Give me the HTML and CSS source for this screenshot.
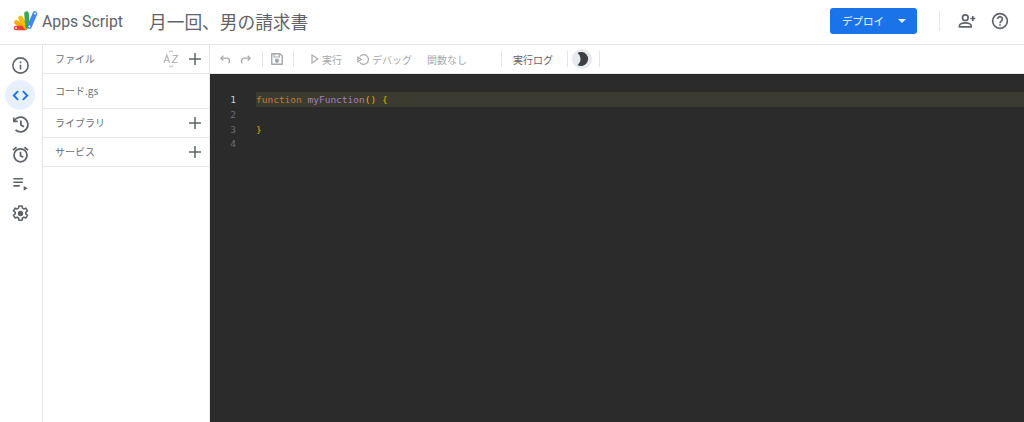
FILE: index.html
```html
<!DOCTYPE html>
<html lang="ja">
<head>
<meta charset="utf-8">
<title>Apps Script</title>
<link rel="stylesheet" href="styles.css">
</head>
<body>
<header class="topbar">
  <svg class="logo" width="26" height="22" viewBox="0 0 26 22">
    <g fill="none" stroke-linecap="round" stroke-width="4.600">
      <path d="M3.500 12.500 12 17.500" stroke="#f9ab00"/>
      <path d="M3 18 12 18" stroke="#ea4335"/>
      <path d="M7.500 8 13 17" stroke="#fbbc04"/>
      <path d="M13.500 3.500 14.500 16.500" stroke="#34a853"/>
      <path d="M22 3.500 16.500 16.500" stroke="#4285f4"/>
    </g>
    <circle cx="16.500" cy="16.500" r="1" fill="#fff"/>
    <circle cx="22" cy="3.500" r="1" fill="#fff"/>
    <circle cx="3" cy="18" r="1" fill="#fff"/>
  </svg>
  <span class="product">Apps Script</span>
  <span class="project">月一回、男の請求書</span>
  <button class="deploy"><span>デプロイ</span><i class="caret"></i></button>
  <span class="top-divider"></span>
  <svg class="top-icon first" width="20" height="20" viewBox="0 0 24 24" fill="none" stroke="#5f6368" stroke-width="2">
    <circle cx="10" cy="8" r="3.400"/>
    <path d="M3 19v-1.600c0-2 4.400-3.200 7-3.200s7 1.200 7 3.200V19z"/>
    <path d="M19 6v6M16 9h6"/>
  </svg>
  <svg class="top-icon" width="18" height="18" viewBox="0 0 24 24" fill="none" stroke="#5f6368" stroke-width="2.200">
    <circle cx="12" cy="12" r="9.800"/>
    <path d="M8.800 9.400a3.200 3.200 0 1 1 5 2.700c-1.200.8-1.800 1.400-1.800 2.900"/>
    <path d="M12 16.400v2"/>
  </svg>
</header>
<div class="main">
  <nav class="rail">
    <span class="rail-btn">
      <svg width="19" height="19" viewBox="0 0 24 24" fill="none" stroke="#5f6368" stroke-width="2"><circle cx="12" cy="12" r="9.600"/><path d="M12 11v6M12 7v2"/></svg>
    </span>
    <span class="rail-btn active">
      <svg width="19" height="19" viewBox="0 0 24 24" fill="none" stroke="#1a73e8" stroke-width="2.400"><path d="M9 6.500 3.500 12 9 17.500M15 6.500l5.500 5.500L15 17.500"/></svg>
    </span>
    <span class="rail-btn">
      <svg width="19" height="19" viewBox="0 0 24 24" fill="none" stroke="#5f6368" stroke-width="2.200"><path d="M4 7.500A9.300 9.300 0 1 1 5.700 18.800"/><path d="M3.500 3v5h5" stroke-width="2"/><path d="M12.500 7v5.500l4 2.400"/></svg>
    </span>
    <span class="rail-btn">
      <svg width="19" height="19" viewBox="0 0 24 24" fill="none" stroke="#5f6368" stroke-width="2.200"><circle cx="12" cy="13" r="8.200"/><path d="M12 8.500V13.500l3.500 2M2.500 6.500 7 2.800M21.500 6.500 17 2.800"/></svg>
    </span>
    <span class="rail-btn">
      <svg width="19" height="19" viewBox="0 0 24 24" fill="#5f6368"><path d="M3 5h12v2H3zM3 9.500h12v2H3zM3 14h8v2H3z"/><path d="M16 15v6l5-3z"/></svg>
    </span>
    <span class="rail-btn">
      <svg width="19" height="19" viewBox="0 0 24 24" fill="none" stroke="#5f6368" stroke-width="2"><path d="M10 2.500h4l.5 2.700 1.700 1 2.600-1 2 3.500-2.100 1.700v2l2.100 1.800-2 3.400-2.600-.9-1.700 1-.5 2.800h-4l-.5-2.800-1.700-1-2.600.9-2-3.400 2.100-1.800v-2L3.200 8.700l2-3.500 2.600 1 1.700-1z" stroke-linejoin="round"/><circle cx="12" cy="12" r="2.400" fill="#5f6368"/></svg>
    </span>
  </nav>
  <aside class="files">
    <div class="row head">
      <span class="label">ファイル</span>
      <svg class="az" width="16" height="18" viewBox="0 0 16 18" fill="none" stroke="#b4b6b9" stroke-width="1.200">
        <path d="M1 13 3.800 5 6.600 13M2 10.500h3.600"/>
        <path d="M9.500 5.500h5L9.500 12.500h5"/>
        <path d="M6 2.200 8 .8l2 1.400M6 15.800l2 1.400 2-1.400" stroke-width="1"/>
      </svg>
      <svg class="plus" width="14" height="14" viewBox="0 0 14 14"><path d="M7 1v12M1 7h12" stroke="#5f6368" stroke-width="1.500"/></svg>
    </div>
    <div class="row file"><span class="label">コード.gs</span></div>
    <div class="row">
      <span class="label">ライブラリ</span>
      <svg class="plus" width="14" height="14" viewBox="0 0 14 14"><path d="M7 1v12M1 7h12" stroke="#5f6368" stroke-width="1.500"/></svg>
    </div>
    <div class="row">
      <span class="label">サービス</span>
      <svg class="plus" width="14" height="14" viewBox="0 0 14 14"><path d="M7 1v12M1 7h12" stroke="#5f6368" stroke-width="1.500"/></svg>
    </div>
  </aside>
  <section class="editor">
    <div class="toolbar">
      <svg class="tool" width="13" height="13" viewBox="0 0 24 24" fill="none" stroke="#a6a8ab" stroke-width="2.400"><path d="M8 5 3.500 9.500 8 14"/><path d="M4 9.500h10a5.500 5.500 0 0 1 5.500 5.500 5 5 0 0 1-2 4"/></svg>
      <svg class="tool redo" width="13" height="13" viewBox="0 0 24 24" fill="none" stroke="#a6a8ab" stroke-width="2.400"><path d="M16 5l4.500 4.500L16 14"/><path d="M20 9.500H10A5.500 5.500 0 0 0 4.500 15a5 5 0 0 0 2 4"/></svg>
      <span class="sep s1"></span>
      <svg class="tool" width="14" height="14" viewBox="0 0 24 24" fill="none" stroke="#a6a8ab" stroke-width="2.400"><path d="M3 3h14l4 4v14H3z" stroke-linejoin="round"/><path d="M7 3.500v5h9v-5" stroke-width="2"/><circle cx="12" cy="15" r="2.500" fill="#a6a8ab"/></svg>
      <span class="sep s2"></span>
      <span class="action run"><svg width="8" height="10" viewBox="0 0 8 10" fill="none" stroke="#a6a8ab" stroke-width="1.200"><path d="M1 1l6 4-6 4z"/></svg>実行</span>
      <span class="action debug"><svg width="13" height="13" viewBox="0 0 24 24" fill="none" stroke="#a6a8ab" stroke-width="2.200"><path d="M5 6.500a9 9 0 1 1 0 11"/><path d="M1.500 8l6.500 4-6.500 4z"/></svg>デバッグ</span>
      <span class="action fn">関数なし</span>
      <span class="sep s3"></span>
      <span class="log">実行ログ</span>
      <span class="sep s4"></span>
      <span class="theme"><svg width="14" height="14" viewBox="0 0 14 14"><path d="M2.500 1A7 7 0 1 1 2.500 13 7.500 7.500 0 0 0 2.500 1z" fill="#3c4043"/></svg></span>
      <span class="sep s5"></span>
    </div>
    <div class="code">
      <div class="line current"><span class="num">1</span><span class="text"><span class="kw">function</span> <span class="fname">myFunction</span><span class="br">()</span> <span class="br">{</span></span></div>
      <div class="line"><span class="num">2</span><span class="text"></span></div>
      <div class="line"><span class="num">3</span><span class="text"><span class="br">}</span></span></div>
      <div class="line"><span class="num">4</span><span class="text"></span></div>
    </div>
  </section>
</div>
</body>
</html>
```
FILE: styles.css
```css
* { box-sizing: border-box; }
html, body { margin: 0; height: 100%; }
body {
  width: 1024px;
  height: 422px;
  overflow: hidden;
  background: #fff;
  font-family: "Noto Sans CJK JP", "Noto Sans", sans-serif;
  color: #5f6368;
  display: flex;
  flex-direction: column;
}
.topbar {
  height: 45px;
  flex: none;
  display: flex;
  align-items: center;
  border-bottom: 1px solid #e3e5e8;
  padding-left: 13px;
}
.logo { flex: none; margin-top: -2px; }
.product {
  font-family: "Roboto", sans-serif;
  font-size: 15.800px;
  color: #5f6368;
  margin-left: 3px;
  width: 107px;
  margin-top: -2px;
}
.project {
  font-size: 17.700px;
  line-height: 24px;
  color: #5f6368;
  margin-top: -2px;
}
.deploy {
  margin-left: auto;
  width: 87px;
  height: 26px;
  margin-top: -3px;
  margin-right: -1px;
  border: 0;
  border-radius: 3px;
  background: #1a73e8;
  color: #d7e6fb;
  font: 500 10.500px "Noto Sans CJK JP", sans-serif;
  display: flex;
  align-items: center;
  padding: 0 11px 0 12px;
}
.caret {
  margin-left: auto;
  border: 4px solid transparent;
  border-top-color: #e8f0fe;
  border-bottom: 0;
}
.top-divider {
  width: 1px;
  height: 20px;
  background: #e3e5e8;
  margin: -2px 0 0 23px;
}
.top-icon { flex: none; margin-top: -3px; }
.top-icon.first { margin-left: 17px; }
.top-icon:last-child { margin-left: 14px; margin-right: 15px; }
.main { flex: 1; display: flex; min-height: 0; }
.rail {
  width: 43px;
  flex: none;
  border-right: 1px solid #e3e5e8;
  display: flex;
  flex-direction: column;
  padding-top: 6px;
}
.rail-btn {
  width: 30px;
  height: 30px;
  margin: -0.500px 0 0 5px;
  border-radius: 50%;
  display: flex;
  align-items: center;
  justify-content: center;
}
.rail-btn.active { background: #e8f0fe; }
.files {
  width: 167px;
  flex: none;
  border-right: 1px solid #e3e5e8;
}
.row {
  height: 29px;
  display: flex;
  align-items: center;
  padding: 0 7px 0 12px;
  border-bottom: 1px solid #e3e5e8;
  font-size: 10px;
  color: #6b6f73;
}
.row.file { height: 35px; }
.label { flex: 1; margin-top: -1px; }
.az { flex: none; margin-right: 9px; }
.plus { flex: none; }
.editor { flex: 1; min-width: 0; display: flex; flex-direction: column; }
.toolbar {
  height: 29px;
  flex: none;
  display: flex;
  align-items: center;
  padding-left: 9px;
  font-size: 10px;
  color: #a6a8ab;
  border-bottom: 1px solid #e3e5e8;
}
.tool { flex: none; }
.tool.redo { margin-left: 7px; }
.sep { width: 1px; height: 16px; background: #e3e5e8; flex: none; }
.s1 { margin: 0 7px 0 10px; }
.s2 { margin: 0 0 0 9px; }
.action { display: flex; align-items: center; gap: 3px; white-space: nowrap; }
.run { margin-left: 17px; }
.debug { margin-left: 15px; gap: 2px; }
.fn { margin-left: 15px; }
.s3 { margin-left: 34px; }
.log { color: #5f6368; margin-left: 11px; }
.s4 { margin-left: 14px; }
.theme {
  width: 20px;
  height: 20px;
  border-radius: 50%;
  background: #e8eaed;
  display: flex;
  align-items: center;
  justify-content: center;
  margin-left: 4px;
}
.s5 { margin-left: 7px; }
.code {
  flex: 1;
  background: #2b2b2b;
  padding-top: 18px;
  font: 9.500px/15px "DejaVu Sans Mono", "Liberation Mono", monospace;
}
.line { display: flex; height: 14.800px; }
.num {
  width: 46px;
  flex: none;
  padding-right: 20px;
  text-align: right;
  color: #6e6e6e;
}
.current .num { color: #cfcfcf; }
.text { flex: 1; white-space: pre; }
.current .text { background: #3c3b32; }
.kw { color: #c87a2c; }
.fname { color: #a580b5; }
.br { color: #e0ad00; }
```
